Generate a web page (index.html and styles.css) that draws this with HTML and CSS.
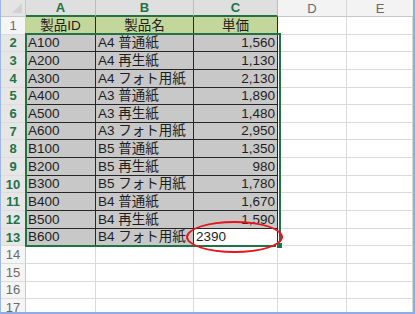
FILE: index.html
```html
<!DOCTYPE html>
<html lang="ja">
<head>
<meta charset="utf-8">
<link rel="stylesheet" href="styles.css">
</head>
<body>
<div class="frame">
  <div class="sheet">
    <div class="corner"><span class="tri"></span></div>
    <div class="ch sel">A</div><div class="ch sel">B</div><div class="ch sel">C</div><div class="ch">D</div><div class="ch last">E</div>

    <div class="rh">1</div>
    <div class="c hd">製品ID</div><div class="c hd">製品名</div><div class="c hd">単価</div><div class="c e"></div><div class="c e last"></div>

    <div class="rh sel">2</div>
    <div class="c d">A100</div><div class="c d">A4 普通紙</div><div class="c d n">1,560</div><div class="c e"></div><div class="c e last"></div>
    <div class="rh sel">3</div>
    <div class="c d">A200</div><div class="c d">A4 再生紙</div><div class="c d n">1,130</div><div class="c e"></div><div class="c e last"></div>
    <div class="rh sel">4</div>
    <div class="c d">A300</div><div class="c d">A4 フォト用紙</div><div class="c d n">2,130</div><div class="c e"></div><div class="c e last"></div>
    <div class="rh sel">5</div>
    <div class="c d">A400</div><div class="c d">A3 普通紙</div><div class="c d n">1,890</div><div class="c e"></div><div class="c e last"></div>
    <div class="rh sel">6</div>
    <div class="c d">A500</div><div class="c d">A3 再生紙</div><div class="c d n">1,480</div><div class="c e"></div><div class="c e last"></div>
    <div class="rh sel">7</div>
    <div class="c d">A600</div><div class="c d">A3 フォト用紙</div><div class="c d n">2,950</div><div class="c e"></div><div class="c e last"></div>
    <div class="rh sel">8</div>
    <div class="c d">B100</div><div class="c d">B5 普通紙</div><div class="c d n">1,350</div><div class="c e"></div><div class="c e last"></div>
    <div class="rh sel">9</div>
    <div class="c d">B200</div><div class="c d">B5 再生紙</div><div class="c d n">980</div><div class="c e"></div><div class="c e last"></div>
    <div class="rh sel">10</div>
    <div class="c d">B300</div><div class="c d">B5 フォト用紙</div><div class="c d n">1,780</div><div class="c e"></div><div class="c e last"></div>
    <div class="rh sel">11</div>
    <div class="c d">B400</div><div class="c d">B4 普通紙</div><div class="c d n">1,670</div><div class="c e"></div><div class="c e last"></div>
    <div class="rh sel">12</div>
    <div class="c d">B500</div><div class="c d">B4 再生紙</div><div class="c d n">1,590</div><div class="c e"></div><div class="c e last"></div>
    <div class="rh sel">13</div>
    <div class="c d">B600</div><div class="c d">B4 フォト用紙</div><div class="c d w">2390</div><div class="c e"></div><div class="c e last"></div>

    <div class="rh">14</div>
    <div class="c e"></div><div class="c e"></div><div class="c e"></div><div class="c e"></div><div class="c e last"></div>
    <div class="rh">15</div>
    <div class="c e"></div><div class="c e"></div><div class="c e"></div><div class="c e"></div><div class="c e last"></div>
    <div class="rh">16</div>
    <div class="c e"></div><div class="c e"></div><div class="c e"></div><div class="c e"></div><div class="c e last"></div>
    <div class="rh">17</div>
    <div class="c e"></div><div class="c e"></div><div class="c e"></div><div class="c e"></div><div class="c e last"></div>

    <div class="selection"><span class="handle"></span></div>
    <div class="ring"></div>
  </div>
</div>
</body>
</html>
```

FILE: styles.css
```css
html, body {
  margin: 0;
  padding: 0;
  background: #ffffff;
}

.frame {
  width: 415px;
  height: 314px;
  box-sizing: border-box;
  border-left: 1px solid #9db8e4;
  border-right: 2px solid #8eaee2;
  border-bottom: 2px solid #8eaee2;
  overflow: hidden;
}

.sheet {
  position: relative;
  display: grid;
  grid-template-columns: 25px 70px 98px 84px 69px 66px;
  grid-template-rows: 17px repeat(17, 17.65px);
  font-family: "Liberation Sans", "Noto Sans CJK JP", sans-serif;
  font-size: 13.5px;
  color: #1e1e1e;
}

.corner {
  background: #e4e4e4;
  border-right: 1px solid #c8c8c8;
  border-bottom: 1px solid #c8c8c8;
  position: relative;
}

.tri {
  position: absolute;
  right: 3px;
  bottom: 3px;
  width: 0;
  height: 0;
  border-left: 10px solid transparent;
  border-bottom: 10px solid #d2d2d2;
}

.ch {
  background: #f3f3f3;
  border-right: 1px solid #d6d6d6;
  border-bottom: 1px solid #c8c8c8;
  color: #6a6a6a;
  font-family: "Liberation Sans", sans-serif;
  font-size: 13px;
  display: flex;
  align-items: center;
  justify-content: center;
}

.ch.sel {
  background: #dfdfdf;
  color: #217346;
  font-weight: bold;
  border-right-color: #bdbdbd;
  border-bottom: 2px solid #217346;
}

.ch.last, .c.last {
  border-right: none;
}

.rh {
  background: #f5f5f5;
  border-right: 1px solid #c8c8c8;
  border-bottom: 1px solid #dcdcdc;
  color: #6a6a6a;
  font-family: "Liberation Sans", sans-serif;
  font-size: 13px;
  display: flex;
  align-items: center;
  justify-content: center;
}

.rh.sel {
  background: #e6e6e6;
  color: #217346;
  font-weight: bold;
}

.c {
  box-sizing: border-box;
  display: flex;
  align-items: flex-end;
  padding: 0 2px 1px 2px;
  white-space: nowrap;
  overflow: hidden;
  line-height: 15px;
}

.c.e {
  border-right: 1px solid #dadada;
  border-bottom: 1px solid #dadada;
}

.c.hd {
  background: #c4d79b;
  border-right: 1px solid #262626;
  border-bottom: 1px solid #262626;
  justify-content: center;
}

.c.d {
  background: #c8c8c8;
  border-right: 1px solid #262626;
  border-bottom: 1px solid #262626;
}

.c.n {
  justify-content: flex-end;
}

.c.w {
  background: #ffffff;
}

.selection {
  position: absolute;
  left: 24px;
  top: 33px;
  width: 256px;
  height: 214px;
  box-sizing: border-box;
  border: 2px solid #217346;
  pointer-events: none;
}

.handle {
  position: absolute;
  right: -4px;
  bottom: -4px;
  width: 5px;
  height: 5px;
  background: #217346;
  border: 1px solid #ffffff;
}

.ring {
  position: absolute;
  left: 185px;
  top: 221px;
  width: 97px;
  height: 32px;
  box-sizing: border-box;
  border: 2px solid #e8141b;
  border-radius: 50%;
}
```
